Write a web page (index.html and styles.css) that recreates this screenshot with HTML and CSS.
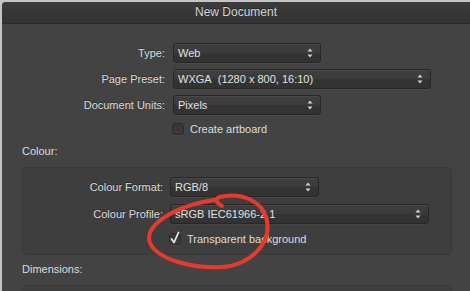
FILE: index.html
```html
<!DOCTYPE html>
<html>
<head>
<meta charset="utf-8">
<link rel="stylesheet" href="styles.css">
</head>
<body>
<div class="window">
  <div class="titlebar">New Document</div>
  <div class="content">
    <div class="form main-form">
      <div class="label">Type:</div>
      <div class="select w-short"><span class="val">Web</span><svg class="arrows" width="6" height="10" viewBox="0 0 6 10"><path d="M0.5 3.5 L3 0.5 L5.5 3.5 Z M0.5 6.5 L3 9.5 L5.5 6.5 Z" fill="#d0d0d0"/></svg></div>
      <div class="label">Page Preset:</div>
      <div class="select w-long"><span class="val">WXGA&nbsp; (1280 x 800, 16:10)</span><svg class="arrows" width="6" height="10" viewBox="0 0 6 10"><path d="M0.5 3.5 L3 0.5 L5.5 3.5 Z M0.5 6.5 L3 9.5 L5.5 6.5 Z" fill="#d0d0d0"/></svg></div>
      <div class="label">Document Units:</div>
      <div class="select w-short"><span class="val">Pixels</span><svg class="arrows" width="6" height="10" viewBox="0 0 6 10"><path d="M0.5 3.5 L3 0.5 L5.5 3.5 Z M0.5 6.5 L3 9.5 L5.5 6.5 Z" fill="#d0d0d0"/></svg></div>
      <div class="label"></div>
      <div class="check-row"><span class="checkbox"></span><span class="check-text">Create artboard</span></div>
    </div>

    <div class="section-title first">Colour:</div>
    <div class="group">
      <div class="form group-form">
        <div class="label">Colour Format:</div>
        <div class="select w-short2"><span class="val">RGB/8</span><svg class="arrows" width="6" height="10" viewBox="0 0 6 10"><path d="M0.5 3.5 L3 0.5 L5.5 3.5 Z M0.5 6.5 L3 9.5 L5.5 6.5 Z" fill="#d0d0d0"/></svg></div>
        <div class="label">Colour Profile:</div>
        <div class="select w-long2"><span class="val">sRGB IEC61966-2.1</span><svg class="arrows" width="6" height="10" viewBox="0 0 6 10"><path d="M0.5 3.5 L3 0.5 L5.5 3.5 Z M0.5 6.5 L3 9.5 L5.5 6.5 Z" fill="#d0d0d0"/></svg></div>
        <div class="label"></div>
        <div class="check-row"><span class="checkbox checked"><svg class="tick" width="12" height="14" viewBox="0 0 12 14"><path d="M2.5 8 L5 11.5 L9.5 1.5" fill="none" stroke="#e4e4e4" stroke-width="1.8" stroke-linecap="round" stroke-linejoin="round"/></svg></span><span class="check-text">Transparent background</span></div>
      </div>
    </div>

    <div class="section-title">Dimensions:</div>
    <div class="group group-open"></div>
  </div>
</div>
<svg class="scribble" width="470" height="291" viewBox="0 0 470 291">
  <path d="M222 206 C216 202, 214 199, 220 197 C240 192, 263 200, 267 221 C271 244, 250 265, 222 267 C192 269, 157 259, 150 243 C144 227, 170 207, 214 200" fill="none" stroke="#e53a2e" stroke-width="4" stroke-linecap="round" stroke-linejoin="round"/>
</svg>
</body>
</html>
```
FILE: styles.css
```css
html, body {
  margin: 0;
  padding: 0;
  height: 100%;
  overflow: hidden;
}
body {
  background: #c4c4c4;
  font-family: "Liberation Sans", Arial, sans-serif;
  font-size: 11px;
  color: #dcdcdc;
  position: relative;
}
.window {
  margin: 2px 0 0 2px;
  height: calc(100% - 2px);
  background: #434343;
  border-top-left-radius: 4px;
  overflow: hidden;
}
.titlebar {
  height: 21px;
  line-height: 21px;
  text-align: center;
  font-size: 12px;
  color: #d4d4d4;
  background: linear-gradient(#3b3b3b, #333333);
  border-bottom: 1px solid #2a2a2a;
  text-shadow: 0 -1px 0 rgba(0,0,0,0.4);
}
.content {
  padding-top: 19px;
}
.form {
  display: grid;
  align-items: center;
}
.main-form {
  grid-template-columns: 163px auto;
  column-gap: 8px;
  row-gap: 6px;
  justify-items: start;
}
.label {
  justify-self: end;
  white-space: nowrap;
  text-shadow: 0 -1px 0 rgba(0,0,0,0.35);
}
.select {
  box-sizing: border-box;
  height: 20px;
  border: 1px solid #272727;
  border-radius: 3px;
  background: linear-gradient(#3f3f3f, #3b3b3b 50%, #343434 50%, #323232);
  box-shadow: inset 0 1px 0 rgba(255,255,255,0.06), 0 1px 0 rgba(255,255,255,0.04);
  display: flex;
  align-items: center;
  justify-content: space-between;
  padding: 0 7px 0 4px;
  color: #e0e0e0;
}
.val {
  white-space: nowrap;
}
.arrows {
  display: block;
}
.w-short { width: 148px; }
.w-long { width: 258px; }
.w-short2 { width: 149px; }
.w-long2 { width: 259px; }
.check-row {
  display: flex;
  align-items: center;
  height: 16px;
  gap: 6px;
}
.checkbox {
  box-sizing: border-box;
  width: 12px;
  height: 12px;
  margin-left: -1px;
  border: 1px solid #2a2a2a;
  border-radius: 3px;
  background: linear-gradient(#363636, #3b3b3b);
  box-shadow: 0 1px 0 rgba(255,255,255,0.05);
  position: relative;
}
.tick {
  position: absolute;
  left: -1px;
  top: -3px;
}
.check-text {
  white-space: nowrap;
}
.section-title {
  padding-left: 20px;
  height: 14px;
  line-height: 14px;
  margin-top: 7px;
  margin-bottom: 9px;
}
.section-title.first {
  margin-top: 7px;
}
.group {
  box-sizing: border-box;
  margin-left: 20px;
  width: 430px;
  background: #3e3e3e;
  border: 1px solid #393939;
  border-radius: 5px;
  padding: 9px 0 7px 0;
}
.group-form {
  grid-template-columns: 140px auto;
  column-gap: 7px;
  row-gap: 7px;
  justify-items: start;
}
.group-open {
  height: 40px;
  margin-top: 0;
}
.scribble {
  position: absolute;
  left: 0;
  top: 0;
  pointer-events: none;
}
```
